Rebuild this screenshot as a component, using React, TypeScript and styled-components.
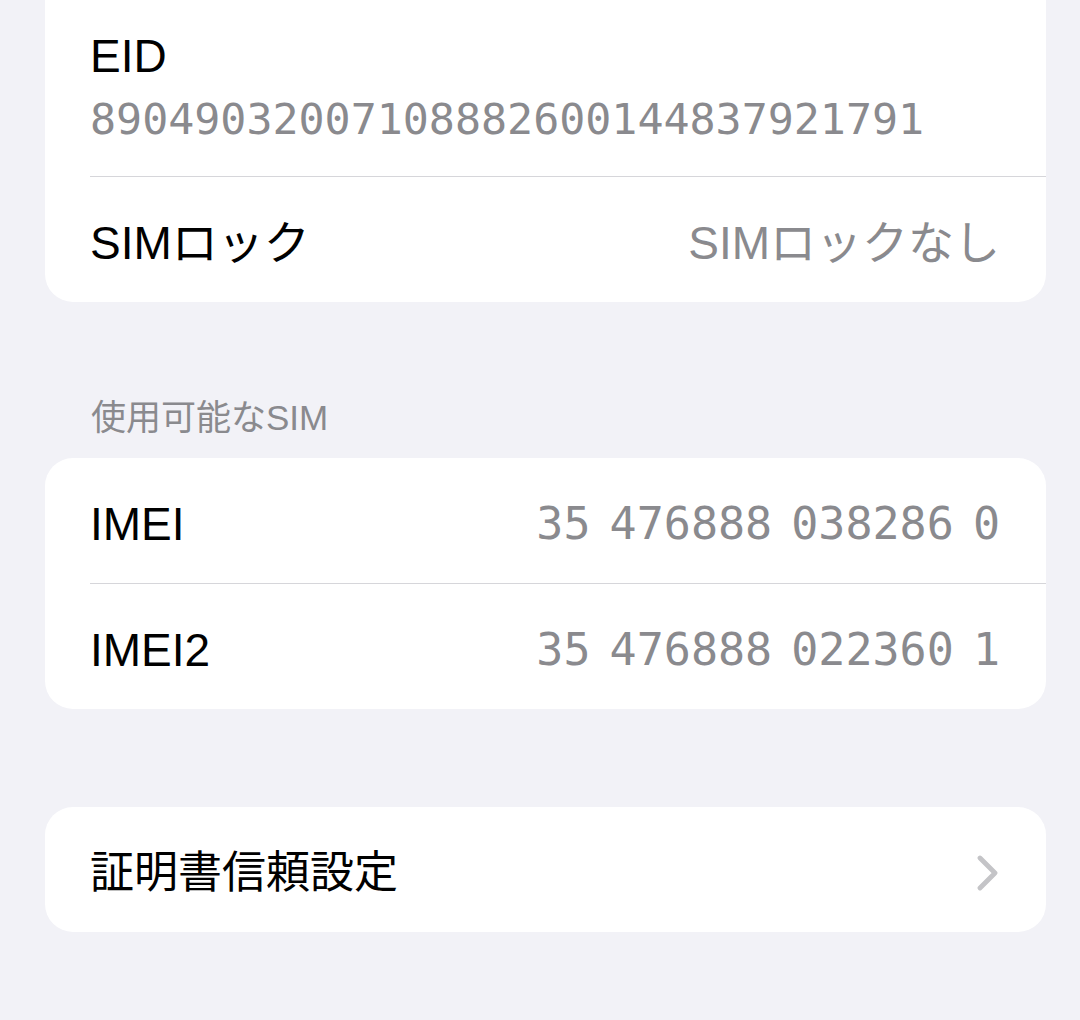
import React from "react";
import styled, { createGlobalStyle } from "styled-components";

const GlobalStyle = createGlobalStyle`
  html, body {
    margin: 0;
    padding: 0;
    background: #f2f2f7;
  }
  body {
    font-family: "Liberation Sans", "Noto Sans CJK JP", sans-serif;
    -webkit-font-smoothing: antialiased;
  }
`;

const Page = styled.div`
  display: flex;
  flex-direction: column;
  padding: 0 34px 0 45px;
  min-height: 1020px;
  box-sizing: border-box;
`;

const Card = styled.section<{ $flatTop?: boolean; $gapTop?: number }>`
  background: #ffffff;
  border-radius: ${(p) => (p.$flatTop ? "0 0 28px 28px" : "28px")};
  margin-top: ${(p) => p.$gapTop ?? 0}px;
  overflow: hidden;
  display: flex;
  flex-direction: column;
`;

const SectionHeader = styled.div`
  margin: 94px 0 18px 46px;
  font-size: 35px;
  line-height: 44px;
  color: #8a8a8e;
  font-family: "Liberation Sans", "Noto Sans CJK JP", sans-serif;
`;

const StackRow = styled.div`
  display: flex;
  flex-direction: column;
  gap: 5px;
  padding: 27px 46px 28px 45px;
`;

const Row = styled.div`
  display: flex;
  align-items: center;
  justify-content: space-between;
  min-height: 125px;
  box-sizing: border-box;
  padding: 7px 46px 0 45px;
`;

const Label = styled.div<{ $size?: number }>`
  font-size: ${(p) => p.$size ?? 46}px;
  line-height: 58px;
  color: #000000;
  font-family: "Liberation Sans", "Noto Sans CJK JP", sans-serif;
  white-space: nowrap;
`;

const Value = styled.div<{ $mono?: boolean; $size?: number; $tightSpaces?: boolean }>`
  font-size: ${(p) => p.$size ?? 46}px;
  line-height: 58px;
  color: #8a8a8e;
  font-family: ${(p) =>
    p.$mono
      ? '"DejaVu Sans Mono", "Liberation Mono", monospace'
      : '"Liberation Sans", "Noto Sans CJK JP", sans-serif'};
  word-spacing: ${(p) => (p.$tightSpaces ? "-8px" : "normal")};
  white-space: pre;
`;

const Divider = styled.div`
  height: 1px;
  margin-left: 45px;
  background: #d6d6da;
`;

const Chevron = () => (
  <svg width="24" height="36" viewBox="0 0 24 36" fill="none">
    <path
      d="M4 3 L19 18 L4 33"
      stroke="#c4c4c7"
      strokeWidth="4.8"
      strokeLinecap="round"
      strokeLinejoin="round"
    />
  </svg>
);

export default function App() {
  return (
    <>
      <GlobalStyle />
      <Page>
        <Card $flatTop>
          <StackRow>
            <Label>EID</Label>
            <Value $mono $size={43.3}>
              89049032007108882600144837921791
            </Value>
          </StackRow>
          <Divider />
          <Row>
            <Label>SIMロック</Label>
            <Value>SIMロックなし</Value>
          </Row>
        </Card>

        <SectionHeader>使用可能なSIM</SectionHeader>

        <Card>
          <Row>
            <Label>IMEI</Label>
            <Value $mono $size={45} $tightSpaces>
              35 476888 038286 0
            </Value>
          </Row>
          <Divider />
          <Row>
            <Label>IMEI2</Label>
            <Value $mono $size={45} $tightSpaces>
              35 476888 022360 1
            </Value>
          </Row>
        </Card>

        <Card $gapTop={98}>
          <Row>
            <Label $size={44}>証明書信頼設定</Label>
            <Chevron />
          </Row>
        </Card>
      </Page>
    </>
  );
}
